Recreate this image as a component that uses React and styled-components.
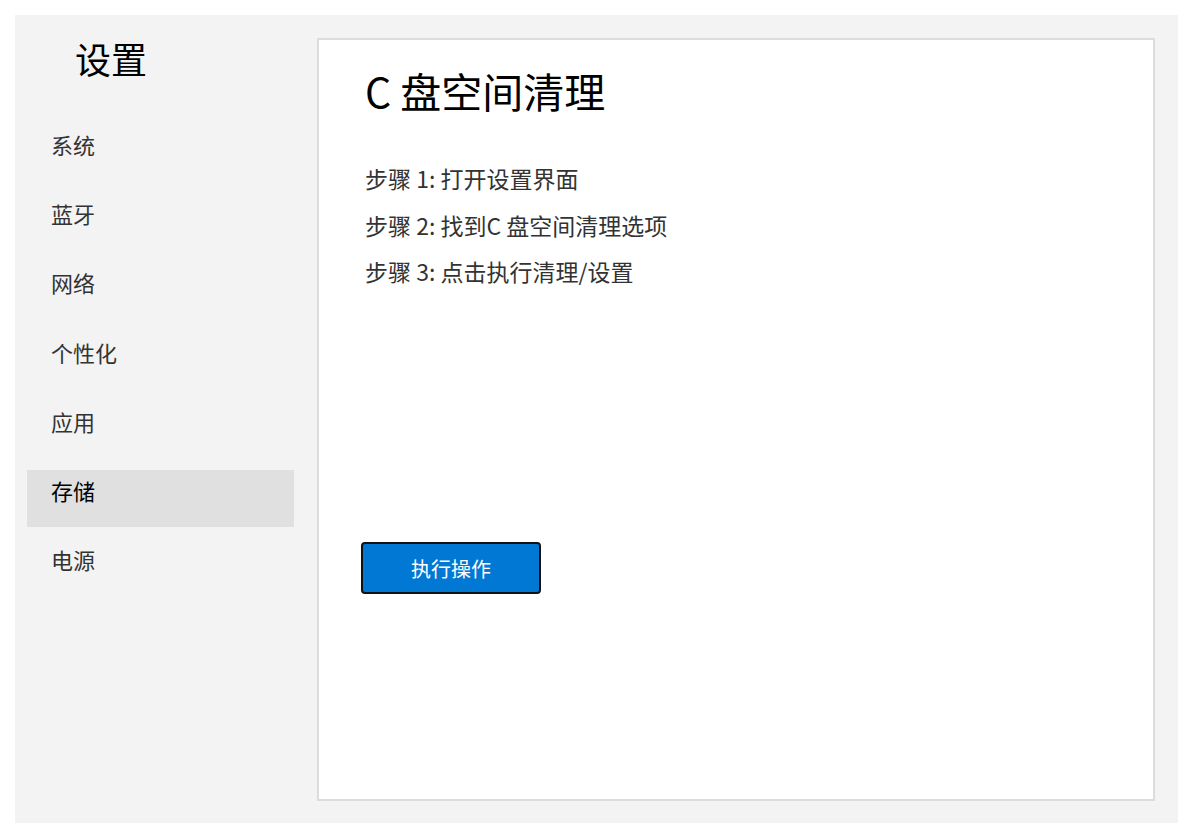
import React, { useState } from 'react';
import styled, { createGlobalStyle } from 'styled-components';

const GlobalStyle = createGlobalStyle`
  html, body {
    margin: 0;
    padding: 0;
    background: #fff;
  }
  body {
    font-family: "Noto Sans CJK SC", "Noto Sans", sans-serif;
  }
`

const navItems = ['系统', '蓝牙', '网络', '个性化', '应用', '存储', '电源']

const steps = [
  '步骤 1: 打开设置界面',
  '步骤 2: 找到C 盘空间清理选项',
  '步骤 3: 点击执行清理/设置',
]

const App = () => {
  const [active, setActive] = useState('存储')

  return (
    <>
      <GlobalStyle />
      <Window>
        <Sidebar>
          <SideTitle>设置</SideTitle>
          <NavList>
            {navItems.map(item => (
              <NavItem
                key={item}
                $active={item === active}
                onClick={() => setActive(item)}
              >
                {item}
              </NavItem>
            ))}
          </NavList>
        </Sidebar>

        <Panel>
          <PanelTitle>C 盘空间清理</PanelTitle>
          <StepList>
            {steps.map(step => (
              <Step key={step}>{step}</Step>
            ))}
          </StepList>
          <ActionButton>执行操作</ActionButton>
        </Panel>
      </Window>
    </>
  )
}

const Window = styled.div`
  display: flex;
  gap: 23px;
  margin: 15px 14px 15px 15px;
  height: 808px;
  box-sizing: border-box;
  padding: 23px 23px 22px 12px;
  background: #f3f3f3;
`

const Sidebar = styled.div`
  width: 267px;
  flex-shrink: 0;
  display: flex;
  flex-direction: column;
`

const SideTitle = styled.h1`
  margin: 2px 0 0 48px;
  font-size: 36px;
  line-height: 36px;
  font-weight: 400;
  color: #000;
`

const NavList = styled.div`
  display: flex;
  flex-direction: column;
  gap: 12.2px;
  margin-top: 48px;
`

const NavItem = styled.div`
  height: 57px;
  box-sizing: border-box;
  padding: 9px 24px 0;
  font-size: 22px;
  line-height: 22px;
  color: ${p => (p.$active ? '#000' : '#333')};
  background: ${p => (p.$active ? '#e0e0e0' : 'transparent')};
  cursor: pointer;
`

const Panel = styled.div`
  flex: 1;
  background: #fff;
  border: 2px solid #dcdcdc;
  padding: 30px 46px;
  display: flex;
  flex-direction: column;
  align-items: flex-start;
`

const PanelTitle = styled.h2`
  margin: 0;
  font-size: 41px;
  line-height: 41px;
  font-weight: 400;
  color: #000;
`

const StepList = styled.div`
  display: flex;
  flex-direction: column;
  gap: 23.5px;
  margin-top: 56px;
`

const Step = styled.p`
  margin: 0;
  font-size: 23px;
  line-height: 23px;
  color: #333;
`

const ActionButton = styled.button`
  margin: 259px 0 0 -4px;
  width: 180px;
  height: 52px;
  box-sizing: border-box;
  background: #0078d4;
  color: #fff;
  border: 2px solid #111;
  border-radius: 4px;
  font-family: inherit;
  font-size: 20px;
  cursor: pointer;
`

export default App;
